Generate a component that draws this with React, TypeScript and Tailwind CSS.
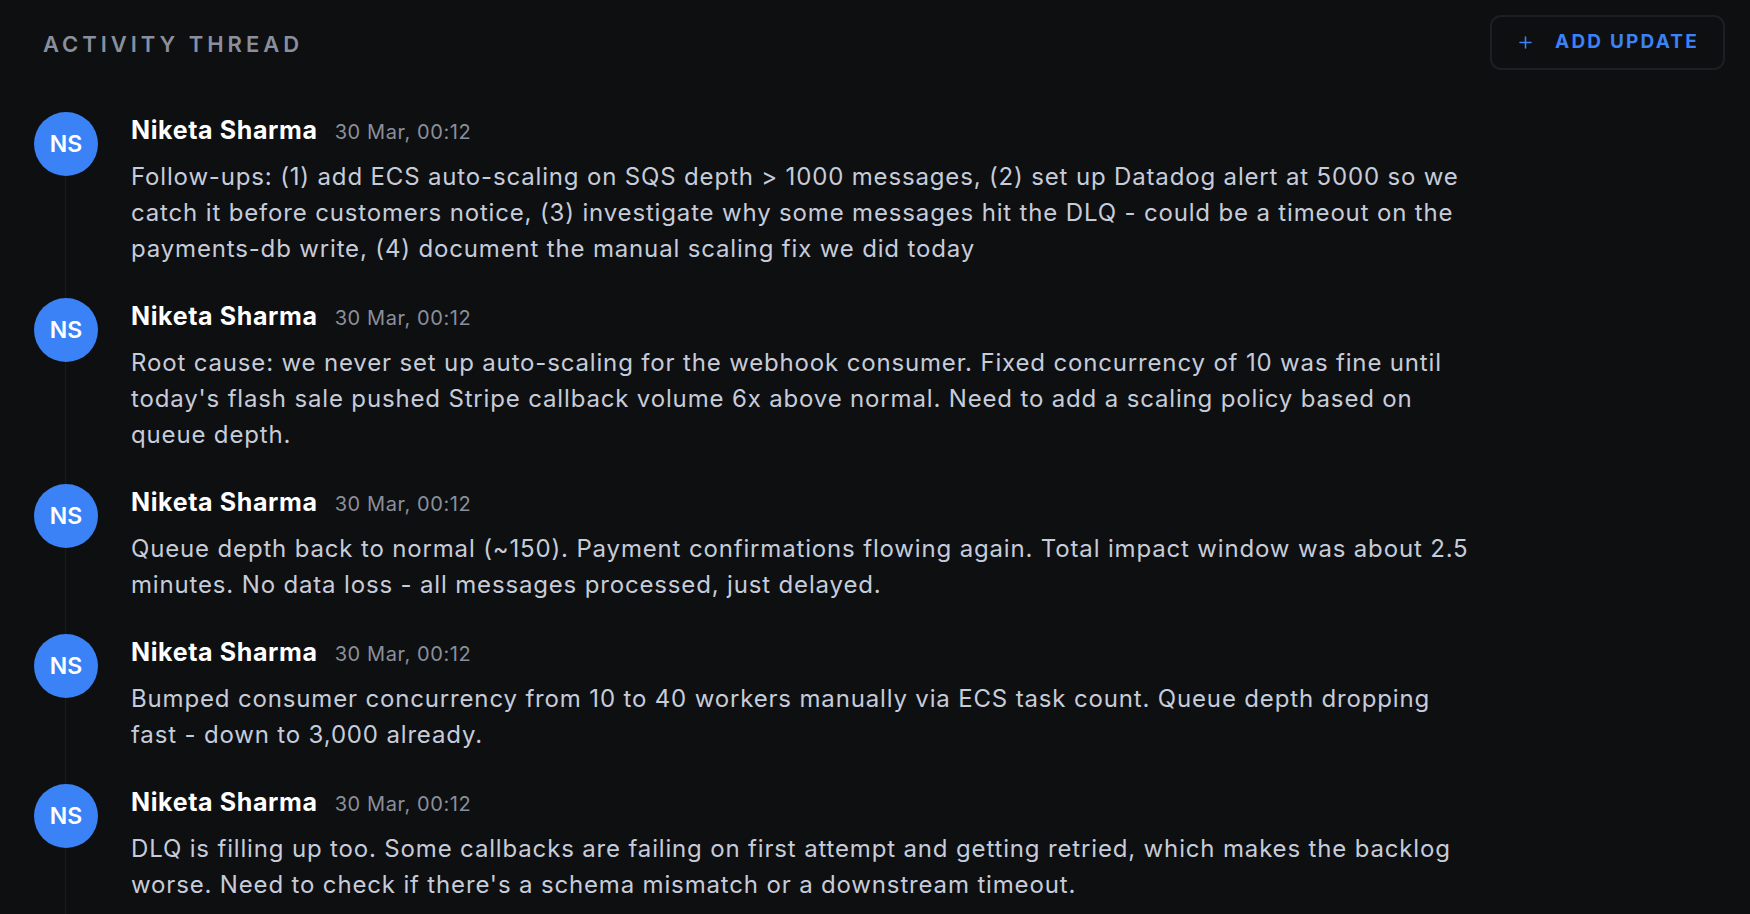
import { Plus } from 'lucide-react';

const updates = [
    'Follow-ups: (1) add ECS auto-scaling on SQS depth > 1000 messages, (2) set up Datadog alert at 5000 so we catch it before customers notice, (3) investigate why some messages hit the DLQ - could be a timeout on the payments-db write, (4) document the manual scaling fix we did today',
    "Root cause: we never set up auto-scaling for the webhook consumer. Fixed concurrency of 10 was fine until today's flash sale pushed Stripe callback volume 6x above normal. Need to add a scaling policy based on queue depth.",
    'Queue depth back to normal (~150). Payment confirmations flowing again. Total impact window was about 2.5 minutes. No data loss - all messages processed, just delayed.',
    'Bumped consumer concurrency from 10 to 40 workers manually via ECS task count. Queue depth dropping fast - down to 3,000 already.',
    "DLQ is filling up too. Some callbacks are failing on first attempt and getting retried, which makes the backlog worse. Need to check if there's a schema mismatch or a downstream timeout.",
];

export default function App() {
    return (
        <div className="h-screen overflow-hidden bg-[#0e0f11] font-['Inter','Liberation_Sans',sans-serif] antialiased">
            <div className="pl-[34px] pr-[25px] pt-[15px]">
                {/* Header */}
                <div className="flex items-center justify-between">
                    <h2 className="pl-[9px] pt-[3px] text-[22px] font-semibold uppercase tracking-[0.18em] text-[#8a8f9d]">
                        Activity Thread
                    </h2>
                    <button className="flex h-[55px] w-[235px] items-center justify-center gap-[20px] rounded-[11px] border-2 border-[#1e1f23] text-[19px] font-bold uppercase tracking-[0.115em] text-[#3b82f6]">
                        <Plus className="h-[19px] w-[19px]" strokeWidth={2} />
                        Add update
                    </button>
                </div>

                {/* Thread */}
                <div className="mt-[42px] flex flex-col gap-[31px]">
                    {updates.map((text, i) => (
                        <ThreadItem key={i} text={text} />
                    ))}
                </div>
            </div>
        </div>
    );
}

function ThreadItem({ text }: { text: string }) {
    return (
        <div className="relative flex gap-[33px]">
            <div className="absolute left-[31px] top-[64px] h-[calc(100%+31px)] w-px bg-[#1a1b1f]" />
            <div className="flex h-[64px] w-[64px] shrink-0 items-center justify-center rounded-full bg-[#3b82f6] text-[23px] font-semibold text-white">
                NS
            </div>
            <div className="max-w-[1340px]">
                <div className="flex items-baseline gap-[17px] leading-[36px]">
                    <span className="text-[25px] font-bold tracking-[0.025em] text-white">Niketa Sharma</span>
                    <span className="text-[20px] tracking-[0.03em] text-[#8b8f99]">30 Mar, 00:12</span>
                </div>
                <p className="mt-[9px] text-[24px] leading-[36px] tracking-[0.035em] text-[#c6ccd9]">{text}</p>
            </div>
        </div>
    );
}
